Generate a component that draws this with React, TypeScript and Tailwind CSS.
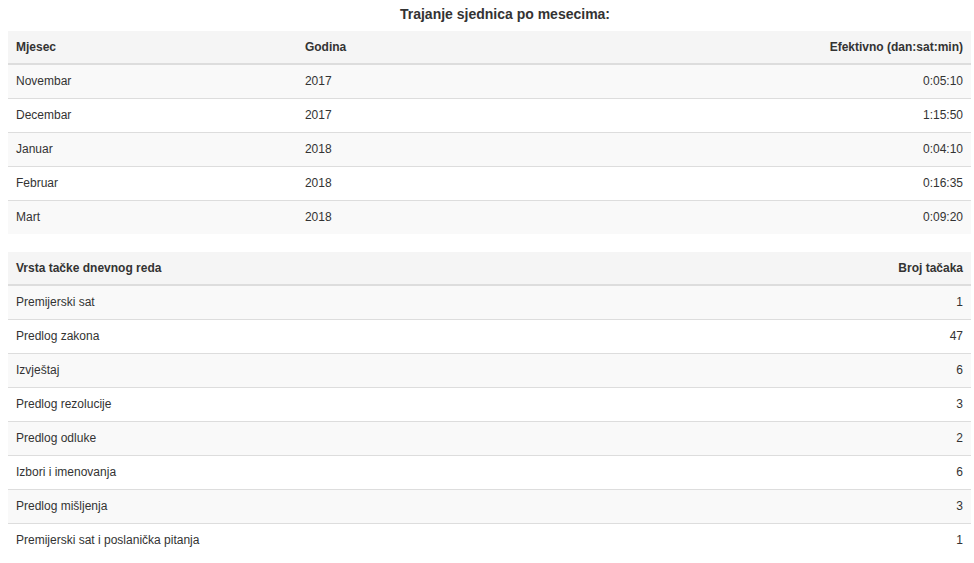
const months = [
  { m: "Novembar", g: "2017", e: "0:05:10" },
  { m: "Decembar", g: "2017", e: "1:15:50" },
  { m: "Januar", g: "2018", e: "0:04:10" },
  { m: "Februar", g: "2018", e: "0:16:35" },
  { m: "Mart", g: "2018", e: "0:09:20" },
];

const items = [
  { t: "Premijerski sat", n: 1 },
  { t: "Predlog zakona", n: 47 },
  { t: "Izvještaj", n: 6 },
  { t: "Predlog rezolucije", n: 3 },
  { t: "Predlog odluke", n: 2 },
  { t: "Izbori i imenovanja", n: 6 },
  { t: "Predlog mišljenja", n: 3 },
  { t: "Premijerski sat i poslanička pitanja", n: 1 },
];

const th = "px-2 py-0 h-[33px] font-bold border-b-2 border-[#ddd]";
const td = "px-2 py-0 h-[34px] border-t border-[#ddd]";

const App = () => {
  return (
    <div className="w-[974px] h-[563px] bg-white text-[#333] text-[12px] leading-[17px] overflow-hidden font-['Liberation_Sans',Arial,sans-serif]">
      <div className="pt-[6px] h-[31px] text-center text-[14px] font-bold pl-[36px]">
        Trajanje sjednica po mesecima:
      </div>
      <div className="pl-2 pr-[3px]">
        <table className="w-full border-collapse mb-[18px]">
          <thead>
            <tr className="bg-[#f5f5f5] text-left">
              <th className={th + " w-[30%]"}>Mjesec</th>
              <th className={th + " w-[30%]"}>Godina</th>
              <th className={th + " text-right"}>Efektivno (dan:sat:min)</th>
            </tr>
          </thead>
          <tbody>
            {months.map((r, i) => (
              <tr key={r.m} className={i % 2 === 0 ? "bg-[#f9f9f9]" : "bg-white"}>
                <td className={td}>{r.m}</td>
                <td className={td}>{r.g}</td>
                <td className={td + " text-right"}>{r.e}</td>
              </tr>
            ))}
          </tbody>
        </table>
        <table className="w-full border-collapse">
          <thead>
            <tr className="bg-[#f5f5f5] text-left">
              <th className={th}>Vrsta tačke dnevnog reda</th>
              <th className={th + " text-right"}>Broj tačaka</th>
            </tr>
          </thead>
          <tbody>
            {items.map((r, i) => (
              <tr key={r.t} className={i % 2 === 0 ? "bg-[#f9f9f9]" : "bg-white"}>
                <td className={td}>{r.t}</td>
                <td className={td + " text-right"}>{r.n}</td>
              </tr>
            ))}
          </tbody>
        </table>
      </div>
    </div>
  );
};

export default App;
